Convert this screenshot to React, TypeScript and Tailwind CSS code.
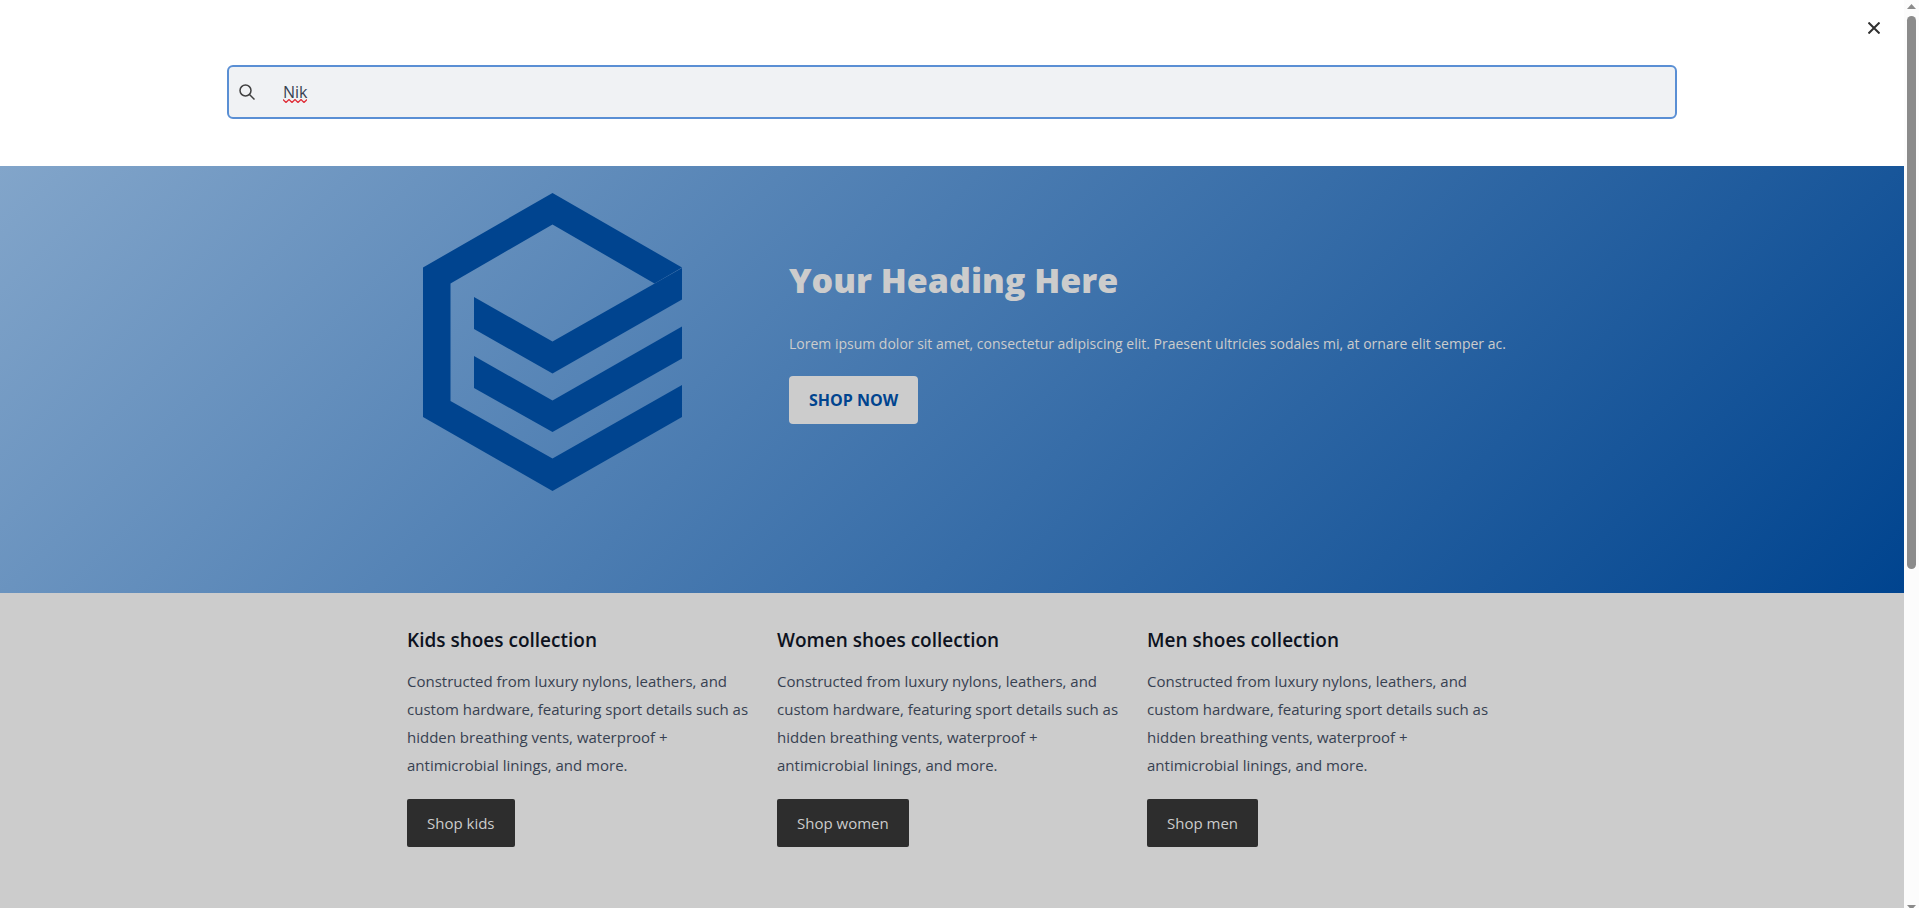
const fontStack = 'font-["Segoe_UI","Open_Sans",sans-serif]';

const blurb =
  "Constructed from luxury nylons, leathers, and custom hardware, featuring sport details such as hidden breathing vents, waterproof + antimicrobial linings, and more.";

const collections = [
  { title: "Kids shoes collection", action: "Shop kids" },
  { title: "Women shoes collection", action: "Shop women" },
  { title: "Men shoes collection", action: "Shop men" },
];

function Logo() {
  return (
    <svg viewBox="0 0 259 298" className="w-[259px] shrink-0" fill="#00448f" aria-hidden="true">
      <path d="M0 74.5 129.5 0 259 74.5 231.5 90.5 129.5 31.5 27.5 90.5V208L129.5 265.5 259 192V224L129.5 298 0 224Z" />
      <path d="M259 75V106.5L129.5 180.500 51 136V104L129.5 148.500Z" />
      <path d="M259 133.5V165.5L129.5 239 51 195V163L129.5 207.500Z" />
    </svg>
  );
}

function SearchPanel() {
  return (
    <header className="bg-white px-[18px] pt-4 pb-[47px]">
      <div className="flex h-[49px] items-start justify-end">
        <button type="button" aria-label="Close search" className="flex size-6 items-center justify-center text-[#303030]">
          <svg viewBox="0 0 12 12" className="size-3" stroke="currentColor" strokeWidth="2" fill="none">
            <path d="M.5.5l11 11M11.5.5l-11 11" />
          </svg>
        </button>
      </div>
      <form role="search" className="mx-auto flex h-[54px] max-w-[1450px] items-center rounded-md border-2 border-[#5a8fd4] bg-[#f0f2f4] pl-[10px]">
        <svg viewBox="0 0 16 16" className="size-4 shrink-0 text-[#404040]" stroke="currentColor" strokeWidth="1.5" fill="none" aria-hidden="true">
          <circle cx="6.5" cy="6.5" r="5.5" />
          <path d="M10.5 10.5l5 5" />
        </svg>
        <div className="relative ml-7 h-full min-w-0 flex-1">
          <input
            type="text"
            aria-label="Search"
            defaultValue="Nik"
            spellCheck={false}
            className="h-full w-full bg-transparent text-base text-[#374151] outline-none"
          />
          <svg
            viewBox="0 0 24 4"
            className="pointer-events-none absolute top-8 left-0 h-1 w-6"
            stroke="#e0303a"
            strokeWidth="1.3"
            fill="none"
            aria-hidden="true"
          >
            <path d="M0 .5l3 3 3-3 3 3 3-3 3 3 3-3 3 3 3-3" />
          </svg>
        </div>
      </form>
    </header>
  );
}

function Hero() {
  return (
    <section className="bg-[linear-gradient(135deg,#82a5ca,#00448f)] px-6 pt-[27px] pb-[102px]">
      <div className="mx-auto flex max-w-[1058px] items-center gap-[107px]">
        <Logo />
        <div className="text-[#ccc]">
          <h1 className="text-[34px] leading-10 font-extrabold">Your Heading Here</h1>
          <p className="mt-8 text-sm leading-6 xl:whitespace-nowrap">
            Lorem ipsum dolor sit amet, consectetur adipiscing elit. Praesent ultricies sodales mi, at ornare elit semper ac.
          </p>
          <button type="button" className="mt-5 h-12 rounded-[4px] bg-[#ccc] px-5 text-base font-bold text-[#00448f]">
            SHOP NOW
          </button>
        </div>
      </div>
    </section>
  );
}

function Collections() {
  return (
    <section className="flex-1 px-6 pt-[33px] pb-12">
      <div className="mx-auto grid max-w-[1090px] grid-cols-3 gap-5">
        {collections.map(({ title, action }) => (
          <article key={title}>
            <h2 className="text-[19px] leading-7 font-semibold text-[#0d1220]">{title}</h2>
            <p className="mt-[13px] text-[15px] leading-7 text-[#374151]">{blurb}</p>
            <button type="button" className="mt-5 h-12 rounded-xs bg-[#2d2d2d] px-5 text-[15px] text-[#ccc]">
              {action}
            </button>
          </article>
        ))}
      </div>
    </section>
  );
}

function ScrollRail() {
  return (
    <div aria-hidden="true" className="flex w-[15px] shrink-0 flex-col items-center bg-[#fcfcfc] pt-1">
      <svg viewBox="0 0 9 5" className="h-[5px] w-[9px]" fill="#8b8b8b">
        <path d="M0 5 4.5 0 9 5Z" />
      </svg>
      <div className="mt-[7px] h-[553px] w-[9px] rounded-full bg-[#8b8b8b]" />
      <svg viewBox="0 0 9 5" className="mt-auto h-[3px] w-[9px]" preserveAspectRatio="xMidYMin slice" fill="#8b8b8b">
        <path d="M0 0H9L4.5 5Z" />
      </svg>
    </div>
  );
}

export default function App() {
  return (
    <div className={`${fontStack} flex min-h-screen bg-[#ccc]`}>
      <main className="flex min-w-0 flex-1 flex-col">
        <SearchPanel />
        <Hero />
        <Collections />
      </main>
      <ScrollRail />
    </div>
  );
}
